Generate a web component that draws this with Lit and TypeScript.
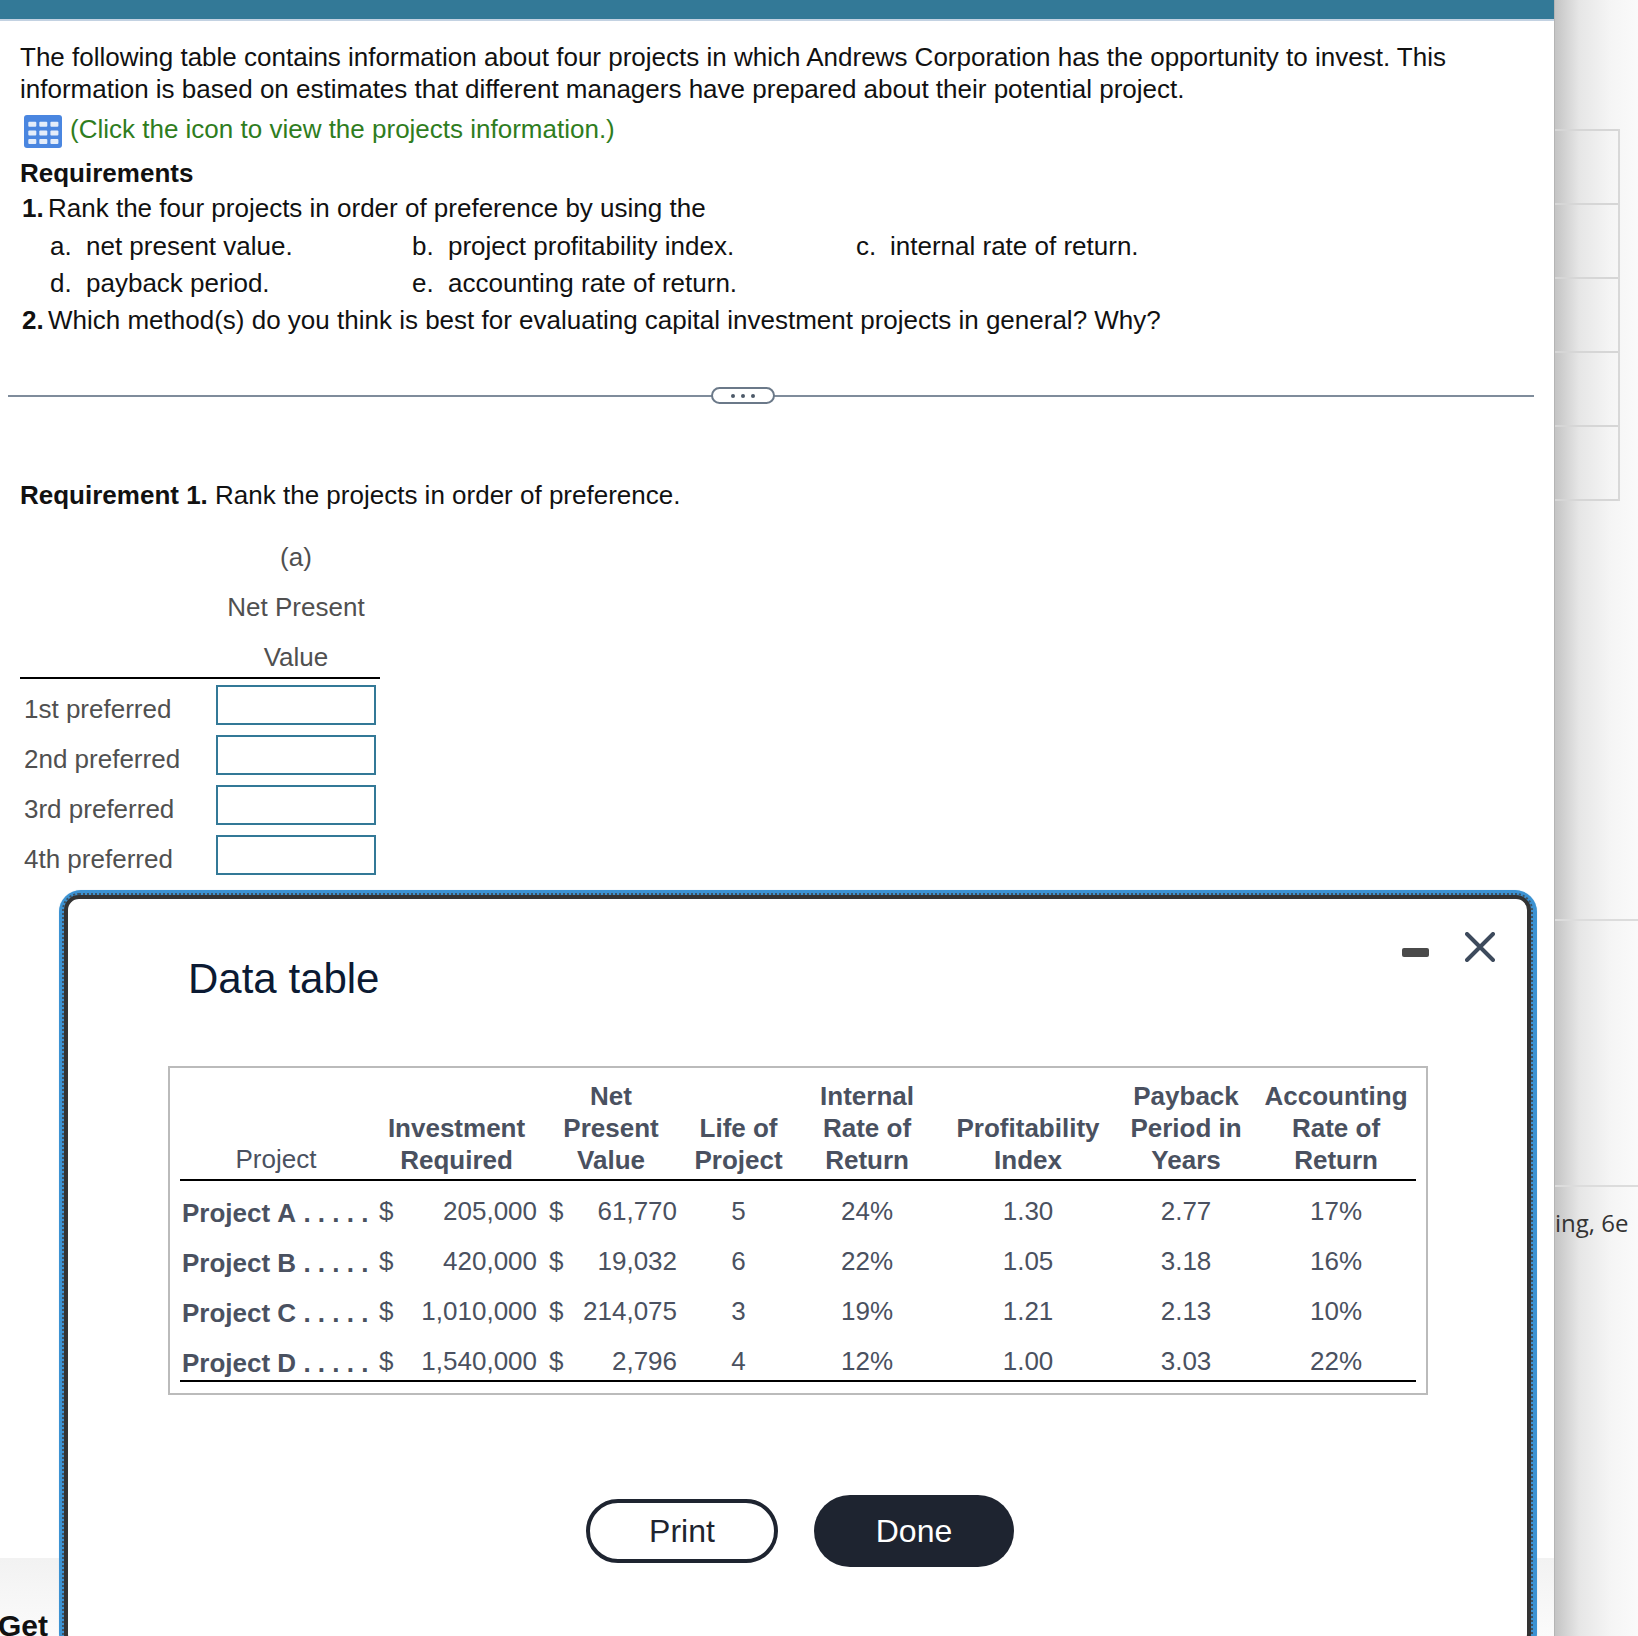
import { LitElement, css, html, svg } from "lit";
import { customElement } from "lit/decorators.js";

const projects = [
  ["Project A", "205,000", "61,770", "5", "24%", "1.30", "2.77", "17%"],
  ["Project B", "420,000", "19,032", "6", "22%", "1.05", "3.18", "16%"],
  ["Project C", "1,010,000", "214,075", "3", "19%", "1.21", "2.13", "10%"],
  ["Project D", "1,540,000", "2,796", "4", "12%", "1.00", "3.03", "22%"],
];

const ranks = ["1st preferred", "2nd preferred", "3rd preferred", "4th preferred"];

@customElement("app-root")
export class AppRoot extends LitElement {
  public static styles = css`
    :host {
      display: block;
      position: relative;
      height: 1636px;
      overflow: hidden;
      font-family: "Liberation Sans", Arial, sans-serif;
      font-size: 26px;
      color: #111;
    }

    .page {
      display: grid;
      grid-template-columns: 1554px 84px;
      height: 1636px;
    }

    .main {
      display: flex;
      flex-direction: column;
      height: 1636px;
      overflow: hidden;
    }

    .top-bar {
      flex: none;
      height: 19px;
      background: #337997;
      border-bottom: 2px solid #c3d2e2;
    }

    .content {
      flex: none;
      height: 1537px;
      padding: 20px 0 0 20px;
      box-sizing: border-box;
      line-height: 32px;
    }

    .intro {
      margin: 0;
    }

    .link-row {
      display: flex;
      align-items: center;
      gap: 8px;
      height: 36px;
      margin: 6px 0 0 4px;
      color: #2f7d1e;
    }

    .link-row svg {
      margin-top: 5px;
      filter: blur(0.4px);
    }

    .req-title {
      margin: 10px 0 0;
      font-size: 26px;
      line-height: 32px;
      font-weight: 700;
    }

    .num-row {
      display: flex;
      height: 36px;
      align-items: center;
      margin: 1px 0 0 2px;
    }

    .num-row b {
      width: 26px;
    }

    .parts {
      display: grid;
      grid-template-columns: 362px 444px 1fr;
      grid-auto-rows: 36.5px;
      align-items: center;
      margin: 2px 0 0 30px;
    }

    .part {
      display: flex;
    }

    .part span {
      width: 36px;
    }

    .part:nth-child(3) span {
      width: 34px;
    }

    .divider {
      position: relative;
      height: 2px;
      margin: 57px 20px 0 -12px;
      background: #7f8c9b;
    }

    .dots {
      position: absolute;
      left: 703px;
      top: -8px;
      display: flex;
      align-items: center;
      justify-content: center;
      gap: 6px;
      width: 64px;
      height: 17px;
      box-sizing: border-box;
      background: #fff;
      border: 2px solid #6b7989;
      border-radius: 9px;
    }

    .dots i {
      width: 4px;
      height: 4px;
      border-radius: 50%;
      background: #4d5a69;
    }

    .req-one {
      margin: 82px 0 0;
    }

    .rank-table {
      display: grid;
      grid-template-columns: 196px 160px 4px;
      width: 360px;
      margin-top: 21px;
      color: #505050;
    }

    .rank-head {
      grid-column: 2;
      justify-self: center;
      white-space: nowrap;
      height: 50px;
      line-height: 50px;
    }

    .rank-head.last {
      height: 45px;
    }

    .rank-rule {
      grid-column: 1 / -1;
      height: 2px;
      background: #000;
    }

    .rank-label {
      grid-column: 1;
      height: 50px;
      padding: 14px 0 0 4px;
      box-sizing: border-box;
      line-height: 32px;
      white-space: nowrap;
    }

    .rank-input-cell {
      grid-column: 2;
      height: 50px;
      padding-top: 6px;
      box-sizing: border-box;
    }

    .rank-input-cell input {
      display: block;
      width: 160px;
      height: 40px;
      padding: 0;
      box-sizing: border-box;
      background: #fff;
      border: 2px solid #337997;
      border-radius: 0;
    }

    .footer {
      flex: none;
      height: 79px;
      padding: 48px 0 0 0;
      box-sizing: border-box;
      background: linear-gradient(#f2f2f2, #fbfbfb);
      font-size: 30px;
      font-weight: 700;
      line-height: 40px;
      text-indent: -2px;
      color: #111;
    }

    .side {
      height: 1636px;
      overflow: hidden;
      background: linear-gradient(90deg, #c4c4c4 0, #e6e6e6 24px, #f5f5f5 56px, #fafafa 84px);
      border-left: 1px solid #b4b4b4;
      box-sizing: border-box;
    }

    .side-cells {
      margin: 129px 18px 0 0;
      border-right: 2px solid #d8d8d8;
    }

    .side-cell {
      height: 72.1px;
      border-top: 2px solid #d6d6d6;
    }

    .side-cell:last-child {
      border-bottom: 2px solid #d6d6d6;
    }

    .side-line {
      height: 2px;
      margin-top: 418px;
      background: #dcdcdc;
    }

    .side-line.second {
      margin-top: 264px;
    }

    .side-text {
      padding: 19px 10px 0 0;
      text-align: right;
      font-family: "Open Sans", sans-serif;
      font-size: 24px;
      line-height: 34px;
      color: #333;
      white-space: nowrap;
    }

    .dialog {
      position: absolute;
      left: 59px;
      top: 890px;
      width: 1478px;
      height: 765px;
      padding: 5px 6px 6px 5px;
      box-sizing: border-box;
      background: #3c92d2;
      border-radius: 22px;
      box-shadow: 0 0 1px #a9cde8;
    }

    .panel {
      height: 100%;
      box-sizing: border-box;
      background: #fff;
      border: 4px solid #333;
      border-radius: 15px;
      outline: 2px dotted #3d5364;
    }

    .dialog-head {
      position: relative;
      padding: 55px 0 0 120px;
    }

    .dialog-title {
      margin: 0;
      font-size: 42px;
      font-weight: 400;
      line-height: 50px;
      color: #0b1a33;
    }

    .minimize {
      position: absolute;
      left: 1334px;
      top: 49px;
      width: 27px;
      height: 9px;
      background: #4a4a4a;
      border-radius: 2px;
    }

    .close {
      position: absolute;
      left: 1397px;
      top: 33px;
      width: 30px;
      height: 30px;
    }

    .table-box {
      width: 1260px;
      height: 329px;
      margin: 62px 0 0 100px;
      padding: 12px 10px 0 10px;
      box-sizing: border-box;
      border: 2px solid #bbb;
    }

    table {
      width: 1236px;
      table-layout: fixed;
      border-collapse: collapse;
      color: #4a5160;
      line-height: 32px;
    }

    th {
      padding: 0 0 3px;
      vertical-align: bottom;
      font-weight: 700;
      text-align: center;
      border-bottom: 2px solid #000;
    }

    th.plain {
      padding-bottom: 4px;
      font-weight: 400;
    }

    th:last-child,
    td:last-child {
      padding-left: 2px;
    }

    td {
      padding: 13px 0 5px;
      text-align: center;
      white-space: nowrap;
    }

    td.name {
      padding: 15px 0 3px 2px;
      text-align: left;
      font-weight: 700;
      font-kerning: none;
    }

    td.cash {
      padding-left: 7px;
      text-align: left;
    }

    td.cash.second {
      padding-left: 8px;
    }

    td.money {
      padding-right: 4px;
      text-align: right;
    }

    tbody tr:first-child td {
      padding-top: 14px;
    }

    tbody tr:first-child td.name {
      padding-top: 16px;
    }

    tbody tr:last-child td {
      padding-bottom: 3px;
      border-bottom: 2px solid #000;
    }

    tbody tr:last-child td.name {
      padding-bottom: 1px;
    }

    .actions {
      display: flex;
      align-items: center;
      gap: 36px;
      margin: 100px 0 0 518px;
    }

    button {
      padding: 0;
      font-family: "Liberation Sans", Arial, sans-serif;
      font-size: 32px;
      border-radius: 36px;
      box-sizing: border-box;
    }

    .print {
      width: 192px;
      height: 64px;
      background: #fff;
      border: 4px solid #1e2430;
      color: #1e2430;
    }

    .done {
      width: 200px;
      height: 72px;
      background: #1e2430;
      border: none;
      color: #fff;
    }
  `;

  private renderIcon() {
    const cols = [4.3, 15.3, 26.4];
    const rows = [6.7, 15.6, 24];
    return html`
      <svg width="38" height="33" viewBox="0 0 38 33">
        <rect width="38" height="33" rx="3" fill="#4a86e0" />
        ${rows.map((y) =>
          cols.map(
            (x) =>
              svg`<rect x=${x} y=${y} width="8" height="5" rx="1" fill="#e4edfa" />`
          )
        )}
      </svg>
    `;
  }

  private renderRanks() {
    return html`
      <div class="rank-table">
        <div class="rank-head">(a)</div>
        <div class="rank-head">Net Present</div>
        <div class="rank-head last">Value</div>
        <div class="rank-rule"></div>
        ${ranks.map(
          (label) => html`
            <div class="rank-label">${label}</div>
            <div class="rank-input-cell"><input type="text" /></div>
          `
        )}
      </div>
    `;
  }

  private renderTable() {
    return html`
      <table>
        <colgroup>
          <col style="width: 192px" />
          <col style="width: 30px" />
          <col style="width: 139px" />
          <col style="width: 30px" />
          <col style="width: 110px" />
          <col style="width: 115px" />
          <col style="width: 142px" />
          <col style="width: 180px" />
          <col style="width: 136px" />
          <col style="width: 162px" />
        </colgroup>
        <thead>
          <tr>
            <th class="plain">Project</th>
            <th colspan="2">Investment<br />Required</th>
            <th colspan="2">Net<br />Present<br />Value</th>
            <th>Life of<br />Project</th>
            <th>Internal<br />Rate of<br />Return</th>
            <th>Profitability<br />Index</th>
            <th>Payback<br />Period in<br />Years</th>
            <th>Accounting<br />Rate of<br />Return</th>
          </tr>
        </thead>
        <tbody>
          ${projects.map(
            (p) => html`
              <tr>
                <td class="name">${p[0]} . . . . .</td>
                <td class="cash">$</td>
                <td class="money">${p[1]}</td>
                <td class="cash second">$</td>
                <td class="money">${p[2]}</td>
                <td>${p[3]}</td>
                <td>${p[4]}</td>
                <td>${p[5]}</td>
                <td>${p[6]}</td>
                <td>${p[7]}</td>
              </tr>
            `
          )}
        </tbody>
      </table>
    `;
  }

  public render() {
    return html`
      <div class="page">
        <div class="main">
          <div class="top-bar"></div>
          <div class="content">
            <p class="intro">
              The following table contains information about four projects in which Andrews Corporation has the opportunity to invest. This<br />
              information is based on estimates that different managers have prepared about their potential project.
            </p>
            <div class="link-row">
              ${this.renderIcon()}
              <span>(Click the icon to view the projects information.)</span>
            </div>
            <h2 class="req-title">Requirements</h2>
            <div class="num-row">
              <b>1.</b><span>Rank the four projects in order of preference by using the</span>
            </div>
            <div class="parts">
              <div class="part"><span>a.</span>net present value.</div>
              <div class="part"><span>b.</span>project profitability index.</div>
              <div class="part"><span>c.</span>internal rate of return.</div>
              <div class="part"><span>d.</span>payback period.</div>
              <div class="part"><span>e.</span>accounting rate of return.</div>
            </div>
            <div class="num-row">
              <b>2.</b><span>Which method(s) do you think is best for evaluating capital investment projects in general? Why?</span>
            </div>
            <div class="divider">
              <div class="dots"><i></i><i></i><i></i></div>
            </div>
            <p class="intro req-one"><b>Requirement 1.</b> Rank the projects in order of preference.</p>
            ${this.renderRanks()}
          </div>
          <div class="footer">Get</div>
        </div>
        <aside class="side">
          <div class="side-cells">
            ${[0, 1, 2, 3, 4].map(() => html`<div class="side-cell"></div>`)}
          </div>
          <div class="side-line"></div>
          <div class="side-line second"></div>
          <div class="side-text">ing, 6e</div>
        </aside>
      </div>

      <div class="dialog">
        <div class="panel">
          <div class="dialog-head">
            <h1 class="dialog-title">Data table</h1>
            <div class="minimize"></div>
            <svg class="close" viewBox="0 0 30 30">
              <path d="M2 2 L28 28 M28 2 L2 28" fill="none" stroke="#3d4a5c" stroke-width="4" stroke-linecap="round" />
            </svg>
          </div>
          <div class="table-box">${this.renderTable()}</div>
          <div class="actions">
            <button class="print">Print</button>
            <button class="done">Done</button>
          </div>
        </div>
      </div>
    `;
  }
}
